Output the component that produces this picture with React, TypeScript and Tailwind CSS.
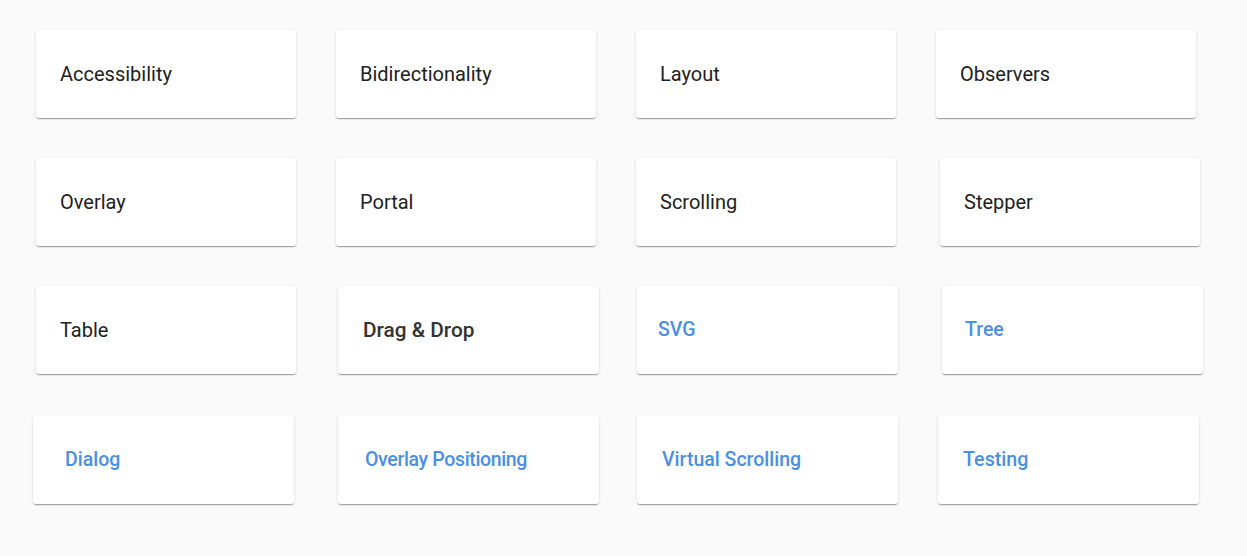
const rows = [
  [
    { label: "Accessibility", ml: "ml-[36px]", w: "w-[260px]", pl: "pl-[24px]", kind: "plain", size: "text-[20px]" },
    { label: "Bidirectionality", ml: "ml-[40px]", w: "w-[260px]", pl: "pl-[24px]", kind: "plain", size: "text-[20px]" },
    { label: "Layout", ml: "ml-[40px]", w: "w-[260px]", pl: "pl-[24px]", kind: "plain", size: "text-[20px]" },
    { label: "Observers", ml: "ml-[40px]", w: "w-[260px]", pl: "pl-[24px]", kind: "plain", size: "text-[20px]" },
  ],
  [
    { label: "Overlay", ml: "ml-[36px]", w: "w-[260px]", pl: "pl-[24px]", kind: "plain", size: "text-[20px]" },
    { label: "Portal", ml: "ml-[40px]", w: "w-[260px]", pl: "pl-[24px]", kind: "plain", size: "text-[20px]" },
    { label: "Scrolling", ml: "ml-[40px]", w: "w-[260px]", pl: "pl-[24px]", kind: "plain", size: "text-[20px]" },
    { label: "Stepper", ml: "ml-[44px]", w: "w-[260px]", pl: "pl-[24px]", kind: "plain", size: "text-[20px]" },
  ],
  [
    { label: "Table", ml: "ml-[36px]", w: "w-[260px]", pl: "pl-[24px]", kind: "plain", size: "text-[20px]" },
    { label: "Drag & Drop", ml: "ml-[42px]", w: "w-[261px]", pl: "pl-[25px]", kind: "bold", size: "text-[20.8px]" },
    { label: "SVG", ml: "ml-[38px]", w: "w-[261px]", pl: "pl-[21px]", kind: "link", size: "text-[19.5px]" },
    { label: "Tree", ml: "ml-[44px]", w: "w-[261px]", pl: "pl-[23px]", kind: "link", size: "text-[19.5px]" },
  ],
  [
    { label: "Dialog", ml: "ml-[33px]", w: "w-[261px]", pl: "pl-[32px]", kind: "link", size: "text-[19.5px]" },
    { label: "Overlay Positioning", ml: "ml-[44px]", w: "w-[261px]", pl: "pl-[27px]", kind: "link", size: "text-[19.5px] tracking-[-0.35px]" },
    { label: "Virtual Scrolling", ml: "ml-[38px]", w: "w-[261px]", pl: "pl-[25px]", kind: "link", size: "text-[19.5px]" },
    { label: "Testing", ml: "ml-[40px]", w: "w-[261px]", pl: "pl-[25px]", kind: "link", size: "text-[19.7px]" },
  ],
];

const textStyles: Record<string, string> = {
  plain: "text-[#212121] font-normal",
  bold: "text-[#333333] font-medium",
  link: "text-[#4a90e2] font-medium",
};

const rowMargins = ["mt-[30px]", "mt-[40px]", "mt-[40px]", "mt-[42px]"];

export default function App() {
  return (
    <div className="w-[1247px] h-[556px] bg-[#fafafa] overflow-hidden font-['Roboto',sans-serif]">
      {rows.map((row, i) => (
        <div key={i} className={`flex ${rowMargins[i]}`}>
          {row.map((card) => (
            <div
              key={card.label}
              className={`${card.ml} ${card.w} ${card.pl} h-[88px] shrink-0 flex items-center bg-white rounded-[3px] shadow-[0_2px_1px_-1px_rgba(0,0,0,0.2),0_1px_1px_0_rgba(0,0,0,0.14),0_1px_3px_0_rgba(0,0,0,0.12)]`}
            >
              <span className={`${card.size} leading-none ${textStyles[card.kind]}`}>{card.label}</span>
            </div>
          ))}
        </div>
      ))}
    </div>
  );
}
